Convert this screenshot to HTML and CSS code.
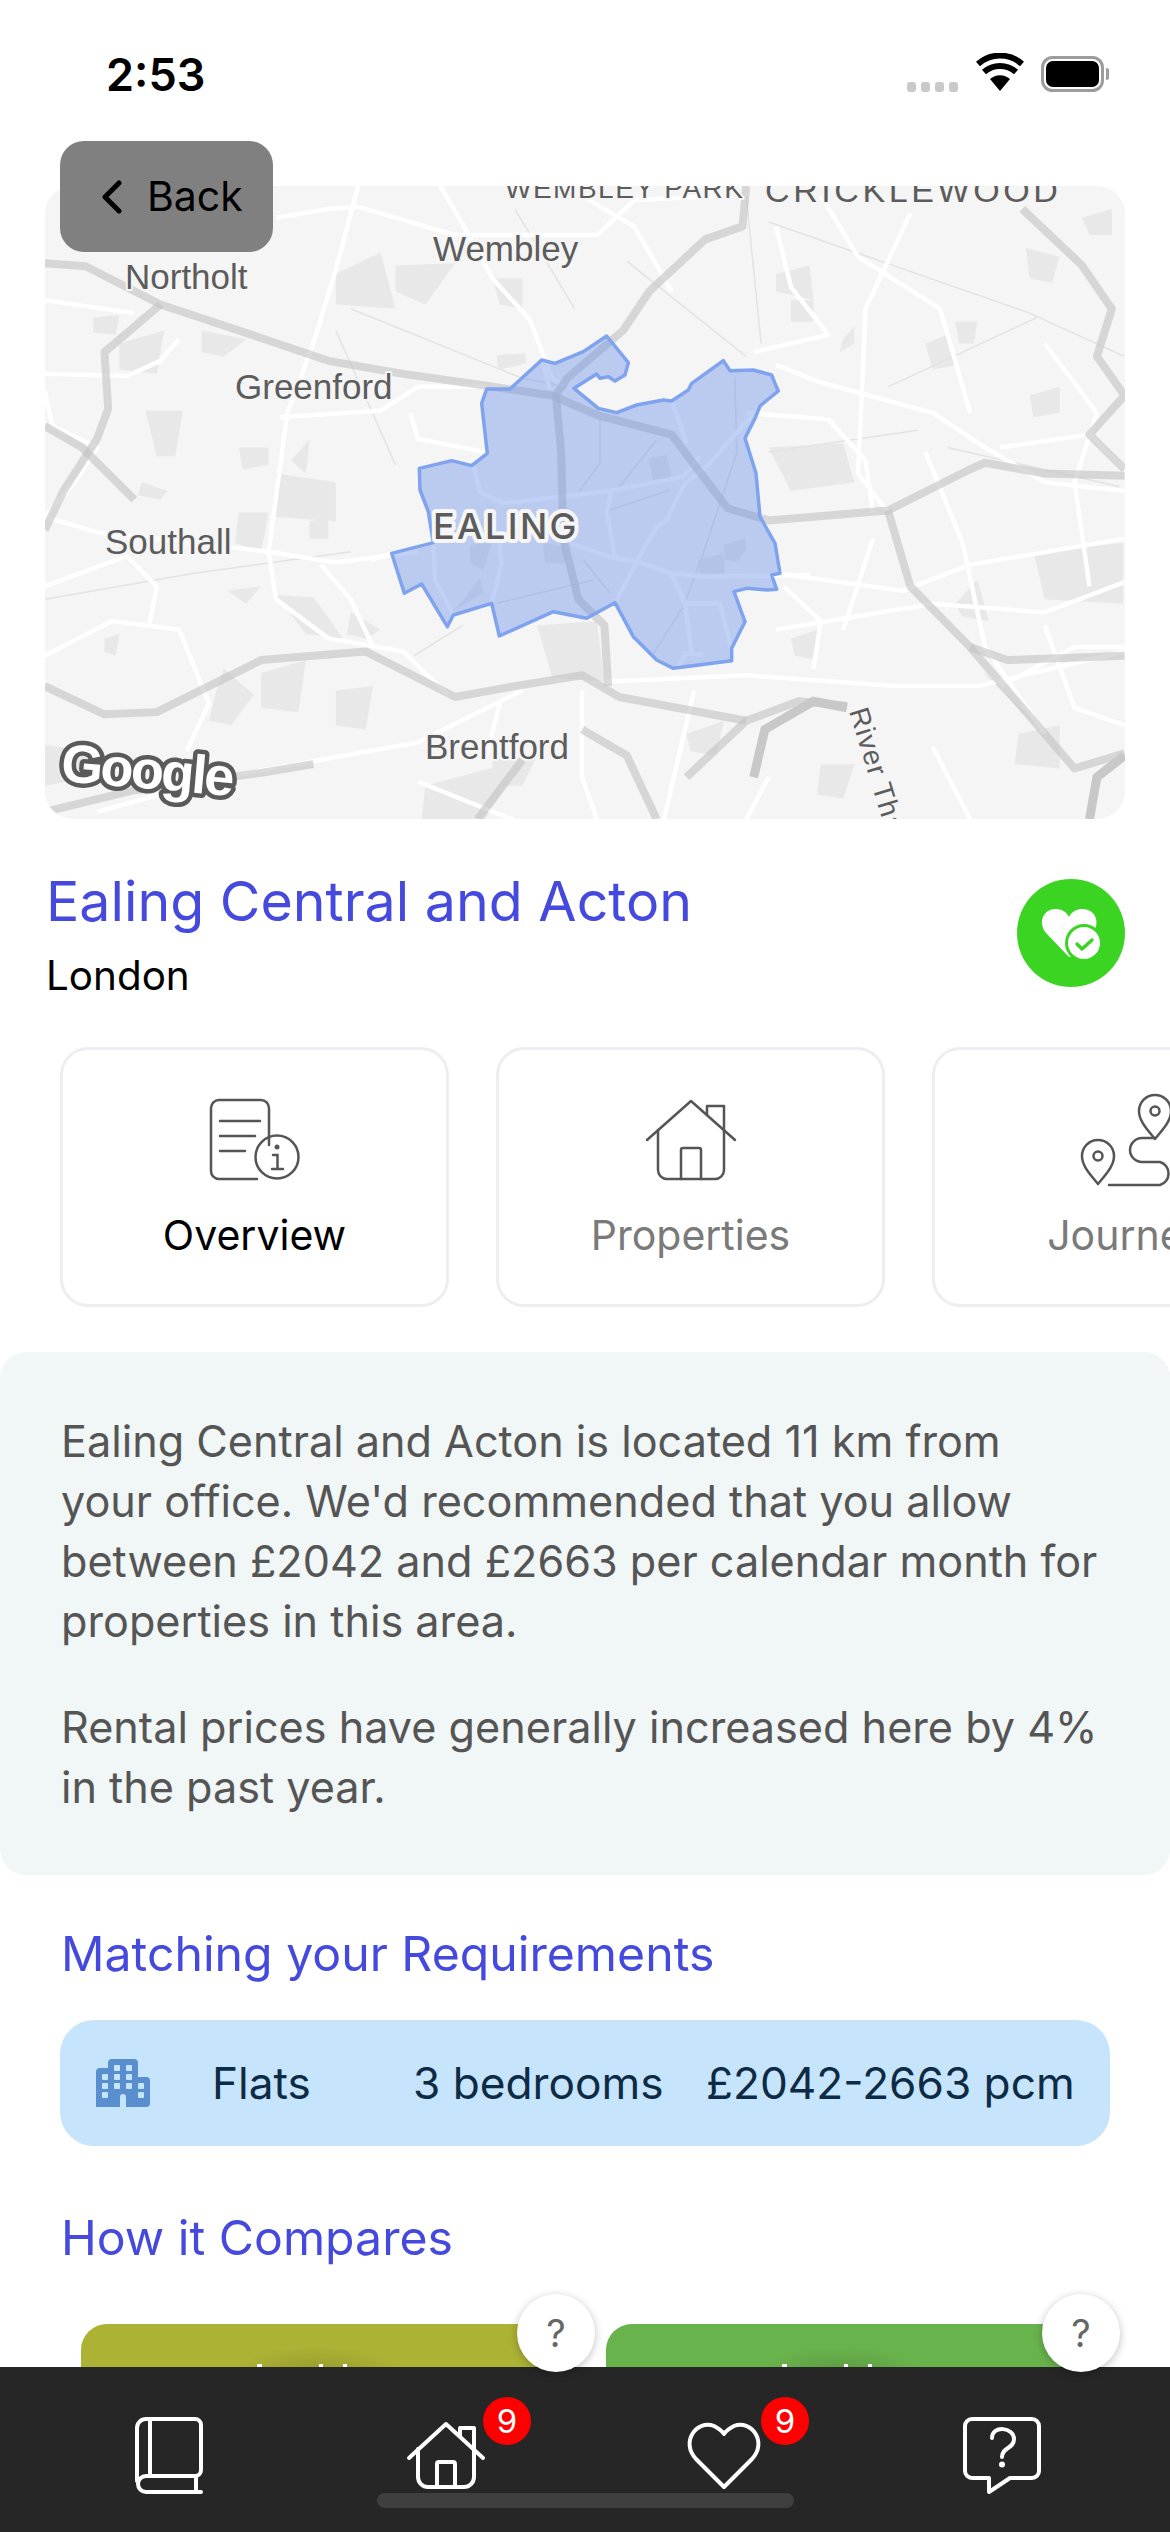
FILE: index.html
```html
<!DOCTYPE html>
<html lang="en">
<head>
<meta charset="utf-8">
<title>Ealing Central and Acton</title>
<link rel="stylesheet" href="styles.css">
</head>
<body>
<div class="screen">
  <header class="status">
    <span class="time">2:53</span>
    <svg class="status-icons" viewBox="907 53 202 40" width="202" height="40">
      <g fill="#c9c9c9"><rect x="907" y="82" width="9" height="10" rx="3"/><rect x="921" y="82" width="9" height="10" rx="3"/><rect x="935" y="82" width="9" height="10" rx="3"/><rect x="949" y="82" width="9" height="10" rx="3"/></g>
      <path d="M1000 91 L990 79 A15 15 0 0 1 1010 79Z" fill="#000"/>
      <path d="M984 72 A24 24 0 0 1 1016 72" fill="none" stroke="#000" stroke-width="6"/>
      <path d="M978 64 A33 33 0 0 1 1022 64" fill="none" stroke="#000" stroke-width="6"/>
      <rect x="1042.500" y="57.500" width="60" height="33" rx="10" fill="none" stroke="#9c9c9c" stroke-width="3"/>
      <rect x="1046" y="61" width="53" height="26" rx="7" fill="#000"/>
      <path d="M1106 68 a5 6 0 0 1 0 12Z" fill="#9c9c9c"/>
    </svg>
  </header>

  <div class="map-wrap">
    <svg class="map" viewBox="45 186 1080 633" width="1080" height="633">
      <rect x="45" y="186" width="1080" height="633" fill="#f5f5f5"/>
      <g transform="translate(0 170) scale(.7462 .4337)">
        <g class="blocks">
          <path d="M450 240L510 190L530 320L450 310Z"/><path d="M530 220L610 215L570 310L530 280Z"/>
          <path d="M660 250L700 250L700 320L670 310Z"/><path d="M125 340L160 335L155 380L125 375Z"/>
          <path d="M160 400L220 370L210 470L160 460Z"/><path d="M270 370L330 390L300 430L270 420Z"/>
          <path d="M195 555L245 555L235 660L210 660Z"/><path d="M320 640L360 640L360 680L325 690Z"/>
          <path d="M390 670L415 620L410 700Z"/><path d="M370 700L450 720L450 810L370 800Z"/>
          <path d="M190 720L225 740L215 760L185 750Z"/><path d="M320 790L360 790L350 880L315 860Z"/>
          <path d="M415 810L440 800L440 850L415 850Z"/><path d="M305 970L350 960L330 1000Z"/>
          <path d="M370 980L420 985L460 1080L410 1070Z"/><path d="M470 1020L510 1060L490 1080L465 1070Z"/>
          <path d="M140 1080L160 1070L155 1120L140 1110Z"/><path d="M350 1160L410 1130L400 1250L350 1240Z"/>
          <path d="M290 1200L300 1150L340 1210L310 1280L280 1270Z"/><path d="M450 1200L500 1190L490 1290L450 1280Z"/>
          <path d="M1040 240L1085 220L1090 300L1040 280Z"/><path d="M1060 300L1090 300L1090 350L1060 350Z"/>
          <path d="M1130 390L1145 360L1145 400L1125 420Z"/><path d="M1240 400L1270 380L1280 450L1250 460Z"/>
          <path d="M1280 350L1310 350L1305 400L1285 400Z"/><path d="M1030 640L1130 630L1145 720L1060 740Z"/>
          <path d="M1385 880L1505 860L1505 1000L1400 990Z"/><path d="M1280 1000L1310 945L1325 1040L1290 1030Z"/>
          <path d="M1060 1080L1095 1060L1095 1130L1065 1120Z"/><path d="M1365 1300L1420 1280L1420 1380L1360 1370Z"/>
          <path d="M720 1050L800 1040L810 1180L740 1170Z"/><path d="M920 1300L970 1270L960 1350L925 1340Z"/>
          <path d="M570 1420L700 1360L650 1497L565 1497Z"/><path d="M1100 1370L1145 1370L1130 1450L1095 1440Z"/>
          <path d="M660 1420L660 1360L720 1350L700 1420Z"/><path d="M40 1320L120 1340L120 1400L60 1420Z"/>
          <path d="M1375 180L1420 200L1410 260L1380 250Z"/><path d="M1380 520L1420 500L1420 560L1385 570Z"/>
          <path d="M1450 110L1490 90L1490 150L1460 150Z"/>
        </g>
        <g class="minor">
          <path d="M470 320L700 480L760 500"/><path d="M840 210L1000 430"/><path d="M1000 60L1020 400"/>
          <path d="M1030 650L1230 600"/><path d="M1030 120L1380 330L1507 430"/><path d="M60 990L260 930L470 880"/>
          <path d="M450 370L530 680"/><path d="M690 90L770 320"/><path d="M1270 640L1500 730"/>
          <path d="M1190 500L1390 340"/><path d="M555 1120L620 1050"/><path d="M1320 1160L1400 1300"/>
        </g>
        <g class="road">
          <path d="M60 510L70 590L130 640L100 720L60 800"/><path d="M480 37L450 230L420 400L385 560L360 880L370 990L440 1080L540 1110L600 1210"/>
          <path d="M590 37L620 125L660 250L710 345L740 480L755 500"/><path d="M370 110L440 90L480 85L610 150L800 150L850 70L960 60"/>
          <path d="M60 470L170 475L215 440L240 390"/><path d="M60 800L130 835L360 880L450 905L560 880"/><path d="M1040 930L1210 970L1300 910L1507 850"/>
          <path d="M375 570L510 555L560 500L650 500"/><path d="M550 560L560 620L650 650"/><path d="M1000 560L1110 575L1160 670L1170 790"/>
          <path d="M780 60L850 130L900 280"/><path d="M1040 130L1060 270L1110 380L1010 420"/><path d="M1040 450L1100 490L1250 560L1320 640L1400 720L1507 740"/>
          <path d="M1220 100L1160 320L1150 700L1190 790"/><path d="M1340 640L1460 610L1507 690"/><path d="M1240 650L1290 860L1320 1100L1400 1300"/>
          <path d="M1050 960L1100 1040L1090 1150"/><path d="M1040 1060L1250 1000L1400 1020L1507 950"/><path d="M810 1180L1000 1165L1200 1190L1310 1190L1507 1110"/>
          <path d="M60 1120L150 1040L240 1060L280 1230L250 1340"/><path d="M130 1480L300 1400L560 1320L700 1200"/><path d="M780 1200L780 1400L800 1497"/>
          <path d="M430 910L470 990L500 1100"/><path d="M1400 400L1470 560L1440 720L1460 960"/><path d="M60 960L170 890L210 960L200 1050"/>
          <path d="M1100 60L1150 200L1260 320L1300 560"/><path d="M1400 1050L1440 1240L1507 1280"/><path d="M930 1200L890 1497"/>
          <path d="M1250 1330L1300 1497"/><path d="M1030 1400L1000 1497"/><path d="M670 1230L650 1360"/><path d="M1340 1190L1440 1100L1507 1100"/>
          <path d="M180 330L60 300"/><path d="M1170 850L1130 1060"/><path d="M560 1410L690 1500"/>
        </g>
      </g>
      <g transform="translate(370 320) scale(.33333)">
        <g class="blocks">
          <path d="M835 415L890 405L905 475L850 485Z"/><path d="M985 720L1060 700L1065 760L990 760Z"/><path d="M1060 675L1125 655L1130 690L1100 725L1065 720Z"/>
          <path d="M300 675L365 670L340 750L300 730Z"/><path d="M520 670L585 680L590 730L525 730Z"/><path d="M255 870L330 775L340 820Z"/><path d="M380 105L465 100L470 130L385 150Z"/>
        </g>
        <g class="minor">
          <path d="M690 300V430L615 530"/><path d="M860 360L740 510"/><path d="M1095 170L1100 400L1000 700L940 860L850 1000"/><path d="M720 570L900 510"/><path d="M640 720L720 820"/><path d="M380 850L670 780"/>
        </g>
        <g class="road">
          <path d="M310 437L330 515L400 550L575 530L725 512L940 470L990 410"/><path d="M725 512L710 575L735 715"/><path d="M600 670L735 715L800 725L905 760L1000 770L1320 765"/>
          <path d="M800 725L860 620L890 600L945 490L1010 440L1170 260"/><path d="M800 725L735 850"/><path d="M905 760L945 850L965 1000"/><path d="M945 850L1050 850L1085 990"/>
          <path d="M0 720L190 668"/><path d="M190 668L195 780L250 885"/><path d="M385 650L395 730L365 850"/><path d="M905 243L950 370"/><path d="M515 120L540 210"/><path d="M925 1040L945 1000L1000 1005"/>
        </g>
      </g>
      <g transform="translate(0 170) scale(.7462 .4337)">
        <g class="motorway">
          <path d="M60 215L115 222L215 310L320 370L440 440L540 470L650 497L740 520L800 565L900 610L935 690L975 780L1030 808L1190 785L1300 690L1320 675L1400 700L1507 705"/>
          <path d="M1000 37L995 130L945 160L870 280L835 370L760 480L745 520L752 650L755 850L775 990L810 1050L815 1190"/>
          <path d="M215 310L140 420L145 550L130 620L85 740L60 830"/>
          <path d="M60 1190L140 1255L210 1250L350 1130L490 1110L610 1215L690 1190L780 1165L830 1215L1000 1270"/>
          <path d="M1190 785L1220 960L1300 1100L1440 1380L1507 1345"/>
          <path d="M1370 90L1450 220L1490 320L1470 430L1507 520L1460 610L1507 690"/>
          <path d="M60 1480L180 1430L350 1390L420 1370"/><path d="M60 590L110 640L180 760"/><path d="M1300 1100L1350 1130L1507 1120"/>
          <path d="M920 1400L1000 1270L1070 1225L1135 1235"/><path d="M780 1290L840 1350L880 1497"/><path d="M700 1360L640 1497"/>
        </g>
        <g class="river">
          <path d="M1010 1400L1025 1290L1090 1225L1135 1240"/><path d="M1460 1497L1470 1400L1507 1350"/>
        </g>
      </g>
      <g transform="translate(370 320) scale(.33333)">
        <path class="area" d="M710 48L775 128L765 165L735 183L715 170L690 175L680 162L612 205L685 265L740 278L800 255L880 240L905 243L955 210L965 190L1060 122L1080 152L1150 150L1205 165L1215 190L1225 213L1170 258L1155 295L1125 355L1158 460L1170 590L1215 670L1230 760L1205 765L1220 808L1190 810L1130 805L1092 815L1125 905L1085 985L1085 1022L910 1045L860 1020L790 950L735 848L650 895L550 875L388 948L365 850L250 885L232 920L155 792L103 820L65 700L190 668L175 575L150 510L148 445L245 422L305 437L352 400L335 250L350 207L420 207L515 120L555 130L640 95Z"/>
      </g>
      <text class="label label-park" x="505" y="198">WEMBLEY PARK</text>
      <text class="label label-district" x="765" y="202">CRICKLEWOOD</text>
      <text class="label" x="433" y="261">Wembley</text>
      <text class="label" x="125" y="289">Northolt</text>
      <text class="label" x="235" y="399">Greenford</text>
      <text class="label" x="105" y="554">Southall</text>
      <text class="label label-area" x="433" y="539">EALING</text>
      <text class="label" x="425" y="759">Brentford</text>
      <text class="label label-river" transform="translate(849 711) rotate(73)">River Thames</text>
      <text class="google" transform="translate(60 781) rotate(5)">Google</text>
    </svg>
    <button class="back">
      <svg viewBox="0 0 24 34" width="24" height="34"><path d="M20 3L6 17L20 31" fill="none" stroke="#000" stroke-width="5" stroke-linecap="round" stroke-linejoin="round"/></svg>
      <span>Back</span>
    </button>
  </div>

  <section class="title-row">
    <div>
      <h1 class="title">Ealing Central and Acton</h1>
      <p class="city">London</p>
    </div>
    <span class="save">
      <svg viewBox="1017 879 108 108" width="108" height="108">
        <path d="M1068 956L1047 934C1037 923 1043 909 1056 909C1063 909 1067 913 1069 917C1071 913 1075 909 1082 909C1095 909 1100 921 1094 932L1072 956Q1070 958 1068 956Z" fill="#fff"/>
        <circle cx="1084" cy="943" r="19" fill="#3bd422"/>
        <circle cx="1084" cy="943" r="16" fill="#fff"/>
        <path d="M1077 944L1082 949L1092 940" fill="none" stroke="#3bd422" stroke-width="3.500" stroke-linecap="round" stroke-linejoin="round"/>
      </svg>
    </span>
  </section>

  <nav class="tabs">
    <div class="tab tab-active">
      <svg class="tab-icon" viewBox="0 0 100 90" width="100" height="90">
        <g fill="none" stroke="#555" stroke-width="2.500" stroke-linecap="round">
          <path d="M64 48V11A8 8 0 0 0 56 3H14A8 8 0 0 0 6 11V74A8 8 0 0 0 14 82H52"/>
          <path d="M15 24H55M15 39H50M15 54H40"/>
          <circle cx="72" cy="60" r="21.500"/>
          <path d="M68 58H72.500V72M67 72H78"/>
        </g>
        <circle cx="72" cy="50" r="2.500" fill="#555"/>
      </svg>
      <span>Overview</span>
    </div>
    <div class="tab">
      <svg class="tab-icon" viewBox="0 7 100 90" width="100" height="90">
        <g fill="none" stroke="#555" stroke-width="2.500" stroke-linecap="round" stroke-linejoin="round">
          <path d="M6 50L50 11L94 50"/>
          <path d="M17 40V80A9 9 0 0 0 26 89H74A9 9 0 0 0 83 80V41"/>
          <path d="M66 25V16H83V41"/>
          <path d="M40 89V60A2 2 0 0 1 42 58H58A2 2 0 0 1 60 60V89"/>
        </g>
      </svg>
      <span>Properties</span>
    </div>
    <div class="tab">
      <svg class="tab-icon tab-icon-route" viewBox="-14 0 130 100" width="130" height="100">
        <g fill="none" stroke="#555" stroke-width="2.500" stroke-linecap="round" stroke-linejoin="round">
          <path d="M22 96C14 86 6 78 6 68A16 16 0 0 1 38 68C38 78 30 86 22 96Z"/>
          <circle cx="22" cy="68" r="4.500"/>
          <path d="M79 51C71 41 63 33 63 23A16 16 0 0 1 95 23C95 33 87 41 79 51Z"/>
          <circle cx="79" cy="23" r="4.500"/>
          <path d="M79 50H66A12 12 0 0 0 66 74H84A12 12 0 0 1 84 97H33"/>
        </g>
      </svg>
      <span>Journey</span>
    </div>
  </nav>

  <section class="panel">
    <p>Ealing Central and Acton is located 11 km from<br>your office. We'd recommended that you allow<br>between £2042 and £2663 per calendar month for<br>properties in this area.</p>
    <p>Rental prices have generally increased here by 4%<br>in the past year.</p>
  </section>

  <h2 class="heading heading-match">Matching your Requirements</h2>
  <div class="pill">
    <svg class="building" viewBox="96 2059 54 48" width="54" height="48">
      <path fill="#5a8fcf" d="M96 2072a4 4 0 0 1 4-4h8v-5a4 4 0 0 1 4-4h22a4 4 0 0 1 4 4v14h8a4 4 0 0 1 4 4v22a4 4 0 0 1-4 4h-50a4 4 0 0 1-4-4Z"/>
      <g fill="#c7e4fd">
        <rect x="114" y="2065" width="6" height="6" rx="1"/><rect x="126" y="2065" width="6" height="6" rx="1"/>
        <rect x="102" y="2074" width="6" height="6" rx="1"/><rect x="114" y="2074" width="6" height="6" rx="1"/><rect x="126" y="2074" width="6" height="6" rx="1"/>
        <rect x="102" y="2083" width="6" height="6" rx="1"/><rect x="114" y="2083" width="6" height="6" rx="1"/><rect x="126" y="2083" width="6" height="6" rx="1"/><rect x="138" y="2083" width="6" height="6" rx="1"/>
        <rect x="102" y="2092" width="6" height="6" rx="1"/><rect x="138" y="2092" width="6" height="6" rx="1"/>
        <path d="M120 2107v-10a3 3 0 0 1 6 0v10Z"/>
      </g>
    </svg>
    <span class="pill-type">Flats</span>
    <span class="pill-beds">3 bedrooms</span>
    <span class="pill-price">£2042-2663 pcm</span>
  </div>

  <h2 class="heading heading-compare">How it Compares</h2>
  <div class="compare">
    <div class="score score-olive"><span class="help">?</span></div>
    <div class="score score-green"><span class="help">?</span></div>
  </div>

  <footer class="tabbar">
    <div class="nav-item">
      <svg viewBox="0 0 90 84" width="90" height="84"><g fill="none" stroke="#fff" stroke-width="4" stroke-linecap="round" stroke-linejoin="round">
        <path d="M14 66V13A9 9 0 0 1 23 4H72A6 6 0 0 1 78 10V55A6 6 0 0 1 72 61H23A8 8 0 0 0 23 77H78"/><path d="M27 5V60"/><path d="M73 62V76"/>
      </g></svg>
    </div>
    <div class="nav-item">
      <svg viewBox="0 0 90 84" width="90" height="84"><g fill="none" stroke="#fff" stroke-width="4" stroke-linecap="round" stroke-linejoin="round">
        <path d="M8 43L45 9L82 43"/><path d="M17 34V62A10 10 0 0 0 27 72H63A10 10 0 0 0 73 62V34"/><path d="M59 21V13H73V34"/><path d="M36 72V49A2 2 0 0 1 38 47H52A2 2 0 0 1 54 49V72"/>
      </g></svg>
      <span class="badge">9</span>
    </div>
    <div class="nav-item">
      <svg viewBox="0 0 90 84" width="90" height="84"><path d="M45 72L17 44C1 27 18 4 35 11C39 13 43 16 45 19C47 16 51 13 55 11C72 4 89 27 73 44Z" fill="none" stroke="#fff" stroke-width="4" stroke-linejoin="round"/></svg>
      <span class="badge">9</span>
    </div>
    <div class="nav-item">
      <svg viewBox="0 0 90 84" width="90" height="84"><g fill="none" stroke="#fff" stroke-width="4" stroke-linecap="round" stroke-linejoin="round">
        <path d="M15 4H75A7 7 0 0 1 82 11V56A7 7 0 0 1 75 63H53L32 77V63H15A7 7 0 0 1 8 56V11A7 7 0 0 1 15 4Z"/>
        <path d="M35 23C35 10 57 12 57 24C57 34 45 32 45 42"/>
      </g><circle cx="45" cy="49.500" r="3" fill="#fff"/></svg>
    </div>
    <span class="home-bar"></span>
  </footer>
</div>
</body>
</html>
```
FILE: styles.css
```css
* { box-sizing: border-box; }
html, body { margin: 0; padding: 0; background: #fff; }
body { font-family: Inter, "Liberation Sans", sans-serif; }
.screen { position: relative; width: 1170px; height: 2532px; overflow: hidden; background: #fff; }

.status { height: 141px; display: flex; justify-content: space-between; align-items: flex-start; padding: 47px 61px 0 106px; }
.time { font-size: 45px; line-height: 56px; font-weight: 600; color: #000; }
.status-icons { display: block; margin-top: 6px; }

.map-wrap { position: relative; margin: 45px 45px 0; width: 1080px; height: 633px; }
.map { display: block; border-radius: 28px; }
.blocks path { fill: #e8e8e8; }
.minor path { fill: none; stroke: #e3e3e3; stroke-width: 1.500; vector-effect: non-scaling-stroke; }
.road path { fill: none; stroke: #fff; stroke-width: 4.500; stroke-linejoin: round; vector-effect: non-scaling-stroke; }
.motorway path { fill: none; stroke: rgba(195, 195, 195, .62); stroke-width: 8; stroke-linejoin: round; vector-effect: non-scaling-stroke; }
.river path { fill: none; stroke: #c8c8c8; stroke-width: 9; vector-effect: non-scaling-stroke; }
.area { fill: rgba(100, 140, 230, .4); stroke: #7fa3ee; stroke-width: 3.500; stroke-linejoin: round; vector-effect: non-scaling-stroke; }
.label { font-family: "Liberation Sans", Arial, sans-serif; font-size: 35px; fill: #5c5c5c; paint-order: stroke; stroke: #f5f5f5; stroke-width: 4px; stroke-linejoin: round; }
.label-park { font-size: 28px; letter-spacing: 1.500px; }
.label-district { font-size: 34px; letter-spacing: 3.600px; }
.label-area { font-family: Inter, sans-serif; font-size: 36px; font-weight: 500; letter-spacing: 2.400px; stroke: #f6f6f6; stroke-width: 8px; }
.label-river { font-size: 28px; letter-spacing: 1px; }
.google { font-family: "Liberation Sans", Arial, sans-serif; font-size: 54px; font-weight: 700; letter-spacing: -2.500px; fill: #fff; stroke: #5a5a5a; stroke-width: 9px; stroke-linejoin: round; paint-order: stroke; }

.back { position: absolute; left: 15px; top: -45px; width: 213px; height: 111px; display: flex; align-items: center; gap: 24px; padding: 0 0 0 39px; border: 0; border-radius: 24px; background: #808080; color: #000; font: 400 41px/1 Inter, sans-serif; }
.back svg { display: block; }

.title-row { display: flex; justify-content: space-between; align-items: center; margin: 46px 45px 0 46px; }
.title { margin: 0; font-size: 55.500px; line-height: 72px; font-weight: 400; color: #4549dd; }
.city { margin: 15px 0 0; font-size: 40.400px; line-height: 48px; color: #000; }
.save { width: 108px; height: 108px; border-radius: 50%; background: #3bd422; display: block; flex: none; }
.save svg { display: block; }

.tabs { display: flex; gap: 47px; margin-top: 47px; padding-left: 60px; overflow: hidden; }
.tab { flex: none; width: 389px; height: 260px; border: 3px solid #eeeef2; border-radius: 28px; display: flex; flex-direction: column; align-items: center; padding-top: 47px; color: #7a7a7a; font-size: 41px; line-height: 52px; }
.tab-active { color: #000; }
.tab-icon { display: block; margin-bottom: 22px; }
.tab-icon-route { margin: -9px 0 21px; }

.panel { margin-top: 45px; height: 523px; padding: 59px 20px 0 61px; background: #f1f6f7; border-radius: 26px; font-size: 43.200px; line-height: 60px; color: #555; }
.panel p { margin: 0 0 46px; white-space: nowrap; }

.heading { margin: 0 0 0 61px; font-size: 48.200px; line-height: 60px; font-weight: 400; color: #4549dd; }
.heading-match { margin-top: 49px; }
.heading-compare { margin-top: 62px; }

.pill { display: flex; align-items: center; margin: 36px 60px 0; height: 126px; padding: 0 30px 0 36px; background: #c7e4fd; border-radius: 34px; font-size: 44.200px; color: #0d2b44; white-space: nowrap; }
.building { display: block; flex: none; }
.pill-type { margin-left: 62px; width: 201px; }
.pill-beds { width: 293px; }

.compare { display: flex; gap: 46px; margin: 56px 0 0 81px; }
.score { position: relative; width: 479px; height: 180px; border-radius: 26px 26px 0 0; }
.score::before { content: ""; position: absolute; left: 150px; top: 22px; width: 170px; height: 60px; border-radius: 50%; background: radial-gradient(closest-side, rgba(0, 0, 0, .14), rgba(0, 0, 0, 0)); }
.score::after { content: ""; position: absolute; left: 176px; top: 40px; width: 94px; height: 3px; background: linear-gradient(90deg, #fff 0 5px, transparent 5px 62px, #fff 62px 66px, transparent 66px 86px, #fff 86px 90px, transparent 90px); }
.score-olive { background: #acb234; }
.score-green { background: #69b34c; }
.help { position: absolute; right: -35px; top: -30px; width: 78px; height: 78px; border-radius: 50%; background: #fff; box-shadow: 0 2px 8px rgba(0, 0, 0, .25); display: flex; align-items: center; justify-content: center; font-size: 38px; color: #666; z-index: 1; }

.tabbar { position: absolute; left: 0; right: 0; bottom: 0; height: 165px; background: #262626; display: grid; grid-template-columns: repeat(4, 278px); padding: 48px 0 0 29px; }
.nav-item { position: relative; justify-self: center; width: 90px; height: 84px; }
.nav-item svg { display: block; }
.badge { position: absolute; left: 82px; top: -18px; width: 48px; height: 48px; border-radius: 50%; background: #f00; color: #fff; font-size: 33px; line-height: 48px; text-align: center; }
.home-bar { position: absolute; left: 377px; top: 126px; width: 417px; height: 15px; border-radius: 8px; background: #3f3f3f; }
```
